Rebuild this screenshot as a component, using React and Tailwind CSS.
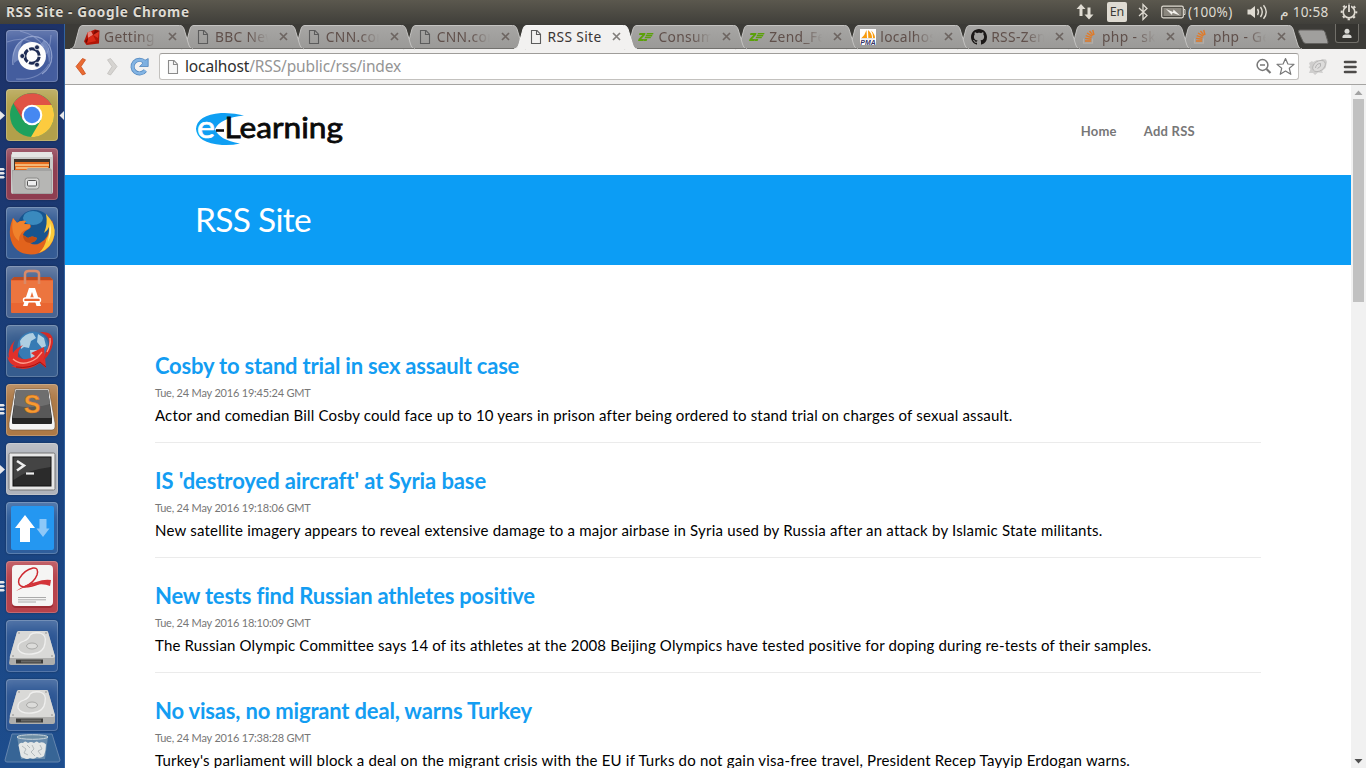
import React from "react";

const UI = "font-['Noto_Sans','Liberation_Sans',sans-serif]";

/* ---------- favicons ---------- */
const PageIcon = ({ color = "#5c5c5c", fill = "none" }) => (
  <svg width="16" height="16" viewBox="0 0 16 16">
    <path d="M3.5 1.5H9L12.5 5.2V14.5H3.5Z" fill={fill} stroke={color} strokeWidth="1.1" />
    <path d="M8.5 1.5V5.5H12.5" fill="none" stroke={color} strokeWidth="1.1" />
  </svg>
);
const RubyIcon = () => (
  <svg width="16" height="16" viewBox="0 0 16 16">
    <path d="M3.5 3.5L11 0.5L15.5 1.5L15 14.5L2.5 16L0 12.5Z" fill="#b11507" />
    <path d="M3.5 3.5L7 2L9 6L4 9Z" fill="#e8857b" />
    <path d="M4 9L9 6L12 12L3 14Z" fill="#d92a17" />
    <path d="M9 6L15 2.5L14 9Z" fill="#da3522" />
    <path d="M1 12L4 9L3 14Z" fill="#6d0b05" />
    <path d="M11 1L15 2L9 6Z" fill="#7d0d06" />
  </svg>
);
const ZendIcon = () => (
  <svg width="16" height="16" viewBox="0 0 16 16">
    <g fill="#5ba10a">
      <path d="M1.5 4H7.5L7 6L3.2 10H6L5.5 12H0L0.6 10L4.4 6H1Z" />
      <path d="M9 4H15.5L15 5.4H8.2ZM8 6.1H14.4L13.9 7.4H7.3ZM7 8.1H13L12.5 9.3H6.6ZM6.3 10H9.3L8.6 12H5.7Z" />
    </g>
  </svg>
);
const PmaIcon = () => (
  <svg width="16" height="16" viewBox="0 0 16 16">
    <rect width="16" height="16" fill="#fff" />
    <path d="M6.5 1L7 9H1.5Q5 6 6.5 1ZM8 1Q12 4 12 9H8.3ZM11 1.5Q15 5 15 9H13Q13 4 11 1.5Z" fill="#f89c0e" />
    <path d="M1 9.8H15" stroke="#bbb" strokeWidth="0.6" />
    <text x="0.3" y="15.8" fontSize="6.3" fontWeight="700" fontStyle="italic" fill="#333366" textLength="15.4" lengthAdjust="spacingAndGlyphs" fontFamily="Liberation Sans, sans-serif">PMA</text>
  </svg>
);
const GithubIcon = () => (
  <svg width="16" height="16" viewBox="0 0 16 16">
    <path fill="#1b1817" d="M8 0C3.58 0 0 3.58 0 8c0 3.54 2.29 6.53 5.47 7.59.4.07.55-.17.55-.38 0-.19-.01-.82-.01-1.49-2.01.37-2.53-.49-2.69-.94-.09-.23-.48-.94-.82-1.13-.28-.15-.68-.52-.01-.53.63-.01 1.08.58 1.23.82.72 1.21 1.87.87 2.33.66.07-.52.28-.87.51-1.07-1.78-.2-3.64-.89-3.64-3.95 0-.87.31-1.59.82-2.15-.08-.2-.36-1.02.08-2.12 0 0 .67-.21 2.2.82.64-.18 1.32-.27 2-.27s1.36.09 2 .27c1.53-1.04 2.2-.82 2.2-.82.44 1.1.16 1.92.08 2.12.51.56.82 1.27.82 2.15 0 3.07-1.87 3.75-3.65 3.95.29.25.54.73.54 1.48 0 1.07-.01 1.93-.01 2.2 0 .21.15.46.55.38A8.01 8.01 0 0 0 16 8c0-4.42-3.58-8-8-8Z" />
  </svg>
);
const StackIcon = () => (
  <svg width="16" height="16" viewBox="0 0 16 16" fill="none">
    <path d="M1.500 9.500V14.200H10.500V9.500" stroke="#b3aca6" strokeWidth="1.2" />
    <path d="M3 12H9.200M3.100 9.400L9.300 10.300M3.700 6.600L9.600 8.600M5 4L10.100 7.200M7.500 2L11 6.400M10.700 1L12 6" stroke="#e07a28" strokeWidth="1.4" />
  </svg>
);

const tabs = [
  { t: "Getting", I: RubyIcon, z: "z-20" },
  { t: "BBC New", I: PageIcon, z: "z-[19]" },
  { t: "CNN.com", I: PageIcon, z: "z-[18]" },
  { t: "CNN.com", I: PageIcon, z: "z-[17]" },
  { t: "RSS Site", I: PageIcon, z: "z-30", active: true },
  { t: "Consum", I: ZendIcon, z: "z-[15]" },
  { t: "Zend_Fe", I: ZendIcon, z: "z-[14]" },
  { t: "localhos", I: PmaIcon, z: "z-[13]" },
  { t: "RSS-Zen", I: GithubIcon, z: "z-[12]" },
  { t: "php - ski", I: StackIcon, z: "z-[11]" },
  { t: "php - Ge", I: StackIcon, z: "z-[10]" },
];

const Tab = ({ t, I, z, active }) => (
  <div className={`relative h-[25px] w-[110.9px] shrink-0 ${z}`}>
    <svg className="absolute left-0 top-0 overflow-visible" width="122" height="25">
      <defs>
        <linearGradient id="tabfill" x1="0" y1="0" x2="0" y2="1">
          <stop offset="0" stopColor="#a7a6a4" />
          <stop offset="1" stopColor="#9a9997" />
        </linearGradient>
      </defs>
      <path
        d="M-1 25C2 24.500 3 23 4 20L8 5C9 2 10 1.500 12 1.500H108.500C111 1.500 112 2.500 113 5L117.500 20C118.500 23 119.500 24.500 122 25Z"
        fill={active ? "#f2f1f0" : "url(#tabfill)"}
      />
      <path
        d="M-1 25C2 24.500 3 23 4 20L8 5C9 2 10 1.500 12 1.500H108.500C111 1.500 112 2.500 113 5L117.500 20C118.500 23 119.500 24.500 122 25"
        fill="none"
        stroke={active ? "#f8f8f7" : "#c4c3c1"}
        strokeWidth="1"
      />
      {!active && <path d="M2 24.500H121" stroke="#72716e" />}
    </svg>
    <div className="relative flex h-full items-center pl-[13px]">
      <span className="w-4"><I /></span>
      <span
        className={`ml-1 w-[56px] whitespace-nowrap text-[13.8px] leading-5 tracking-[0.35px] ${
          active
            ? "text-[#3a3635]"
            : "text-[#60504b] [mask-image:linear-gradient(to_right,black_60%,transparent_95%)]"
        }`}
      >
        {t}
      </span>
      <svg className="ml-[8px]" width="9" height="9" viewBox="0 0 9 9">
        <path d="M1 1L8 8M8 1L1 8" stroke={active ? "#827f7c" : "#6d6561"} strokeWidth="1.7" />
      </svg>
    </div>
  </div>
);

/* ---------- top panel ---------- */
const TopPanel = () => (
  <div className={`flex h-6 shrink-0 items-center bg-linear-to-b from-[#5b584e] to-[#403f3a] pl-[6px] text-[#dfdbd2] ${UI}`}>
    <div className="w-[1070px] text-[13.6px] font-bold leading-6 tracking-[0.62px] [text-shadow:0_-1px_0_#222]">RSS Site - Google Chrome</div>
    <svg width="18" height="18" viewBox="0 0 18 18" fill="#dfdbd2">
      <path d="M5 1L9.500 6H6.500V13H3.500V6H0.500ZM13 16.500L8.500 11.500H11.500V4.500H14.500V11.500H17.500Z" />
    </svg>
    <div className="ml-[13px] flex h-5 w-5 items-center justify-center rounded-[2px] bg-[#dfdbd2] text-[12.5px] text-[#3c3b37]">En</div>
    <svg className="ml-[10px]" width="12" height="18" viewBox="0 0 12 18" fill="none" stroke="#dfdbd2" strokeWidth="1.3">
      <path d="M2 5L10 12.500L6 16.500V1.500L10 5.500L2 13" />
    </svg>
    <svg className="ml-[12px]" width="25" height="14" viewBox="0 0 25 14">
      <rect x="0.7" y="1.200" width="21.600" height="11.600" rx="1.500" fill="none" stroke="#dfdbd2" strokeWidth="1.200" />
      <rect x="2.500" y="3" width="18" height="8" fill="#8b877e" />
      <path d="M23 4.500H24V9.500H23" stroke="#dfdbd2" fill="none" />
      <path d="M5 4L12 7L12.500 4.500L19 10.500L11.500 7.800L11 10Z" fill="#f4f2ed" />
    </svg>
    <div className="ml-[2px] w-[48px] whitespace-nowrap text-[13.6px] leading-6 tracking-[0.3px]">(100%)</div>
    <svg className="ml-[11px]" width="21" height="16" viewBox="0 0 21 16" fill="none" stroke="#dfdbd2" strokeWidth="1.400">
      <path d="M0.500 5.500H3.500L8 2V14L3.500 10.500H0.500Z" fill="#dfdbd2" stroke="none" />
      <path d="M10.500 5Q12.500 8 10.500 11M13.500 3Q17 8 13.500 13" />
      <path d="M16.500 1.200Q22 8 16.500 14.800" />
    </svg>
    <div className="ml-[12px] text-[14px] leading-6 font-['DejaVu_Sans',sans-serif]">م</div>
    <div className="ml-[4px] w-[38px] whitespace-nowrap text-[13.6px] leading-6 tracking-[0.2px]">10:58</div>
    <svg className="ml-[9px]" width="18" height="18" viewBox="0 0 18 18" fill="none" stroke="#dfdbd2">
      <circle cx="9" cy="9" r="5.800" strokeWidth="1.700" />
      <circle cx="9" cy="9" r="7.300" strokeWidth="2" strokeDasharray="2.300 3.430" strokeDashoffset="1" />
      <path d="M9 1V9" stroke="#494741" strokeWidth="4" />
      <path d="M9 1.500V9" strokeWidth="1.800" />
    </svg>
  </div>
);

/* ---------- launcher ---------- */
const Dash = () => (
  <>
    <g fill="none" stroke="#b5c2e4" strokeWidth="1.200" opacity="0.65">
      <path d="M7 35Q5 14 22 7Q36 4 44 17Q50 34 36 44" />
      <path d="M10 49Q33 51 43 34M45 5Q44 20 40 24M1 12Q17 6 27 13M14 1Q31 5 38 17" opacity=".6" />
    </g>
    <path d="M8 33Q5 16 18 9Q12 17 15 28ZM38 10Q48 22 43 34Q43 21 34 15Z" fill="#9eb0da" opacity=".5" />
    <circle cx="26" cy="26" r="14" fill="#fdfdfd" />
    <circle cx="26" cy="26" r="7.200" fill="none" stroke="#1d2b54" strokeWidth="3" strokeDasharray="13.500 1.580" strokeDashoffset="-0.8" />
    <g fill="#1d2b54" stroke="#fff" strokeWidth="0.8">
      <circle cx="16.300" cy="26" r="2.500" /><circle cx="31" cy="17.300" r="2.500" /><circle cx="31" cy="34.700" r="2.500" />
    </g>
  </>
);
const ChromeI = () => (
  <>
    <circle cx="26" cy="26" r="22" fill="#1fa15d" />
    <path d="M7.500 14.500A22 22 0 0 1 45.500 16H26L17 31Z" fill="#e05345" />
    <path d="M45.600 16A22 22 0 0 1 25 48L35 31L26 16Z" fill="#fccb3f" />
    <path d="M7.500 14.500L17 31L15 22Z" fill="#a93a2d" opacity=".35" />
    <circle cx="26" cy="26" r="10.300" fill="#fff" />
    <circle cx="26" cy="26" r="8.200" fill="#4688f1" />
  </>
);
const FilesI = () => (
  <>
    <path d="M7 4H45L47 7V44Q47 46 45 46H7Q5 46 5 44V7Z" fill="#c9c9c7" />
    <path d="M6 4H46V9H6Z" fill="#e5e5e4" />
    <rect x="8" y="11" width="36" height="12" fill="#40342d" />
    <rect x="9" y="14" width="34" height="8" fill="#e66c1f" />
    <path d="M9 17H43M10 20H42" stroke="#f9cf94" strokeWidth="1.300" />
    <path d="M6 22H20L22 20H44L46 22V46H7Z" fill="#a3a3a2" />
    <rect x="7" y="23" width="38" height="22" fill="#b6b6b4" />
    <rect x="19" y="30" width="14" height="11" rx="2.500" fill="#d6d6d4" stroke="#8a8a88" />
    <rect x="21.500" y="32.500" width="9" height="5.500" rx="1" fill="#eee" stroke="#555" />
  </>
);
const FirefoxI = () => (
  <>
    <circle cx="28.500" cy="20" r="17" fill="#17558f" />
    <ellipse cx="27" cy="11" rx="10" ry="7" fill="#52aede" opacity=".6" />
    <path d="M7 11Q3 20 4 29Q7 47 25 47.500Q42 47 47.500 32Q49.500 22 46 13L43 18Q44 31 34 36Q29 39 24 36Q30 35 31 31Q26 28 22 31L17 28Q18 24 23 22Q26 20 24 17.500L18 17L20 14Q14 13 11 16Z" fill="#e2631c" />
    <path d="M40 7Q50 17 48.500 28Q46 41 33 46Q39 40 40.500 32Q44 27 43 20Q42 23 38 26Q42 17 40 7Z" fill="#fbc93a" />
    <path d="M44 16Q47 26 42 35Q43 28 44 16Z" fill="#fff2a0" />
    <path d="M7 11L11 16Q15 13 20 14L18 17L24 17.500Q25 20 22 22Q13 24 13 34Q4 28 7 11Z" fill="#f0822b" />
    <path d="M17 28L22 31Q26 28 31 31Q30 35 24 36Q17 35 17 28Z" fill="#c24c12" />
  </>
);
const SoftwareI = () => (
  <>
    <path d="M5 14L8 11H44L47 14V46Q47 47 46 47H6Q5 47 5 46Z" fill="#e96632" />
    <path d="M8 11H44L47 14H5Z" fill="#ba4c22" />
    <path d="M5 15H47V37H5Z" fill="#ef7e48" opacity=".6" />
    <path d="M19 18V8Q19 5 23 5H29Q33 5 33 8V18" fill="none" stroke="#d98a68" strokeWidth="2.500" />
    <path d="M23 22H29L35 40H30.500L26 26L21.500 40H17Z" fill="#fff" />
    <rect x="17.500" y="32" width="17" height="3.800" rx="1.900" fill="#e96632" stroke="#fff" strokeWidth="1.400" />
  </>
);
const GlobeI = () => (
  <>
    <circle cx="27" cy="22" r="15.500" fill="#377bb4" />
    <path d="M14 16Q19 8 27 8L30 13L25 16L23 23L18 22L15 24ZM32 9L38 13L40 21L36 23L31 17ZM24 25L31 25L30 32L25 34Z" fill="#c3deea" opacity=".85" />
    <path d="M9 15Q1 24 3 33L1 31Q3 39 9 41L5 41Q20 48 34 38L40 43L38 22L25 28L29 31Q20 37 12 32Q11 26 17 20Q10 23 7 28Q6 21 9 15Z" fill="#e0302a" />
    <path d="M34 7Q48 6 47 18Q45 29 37 36L40 26Q45 19 42 13Q39 9 34 7Z" fill="#d62a25" />
    <path d="M7 34Q17 43 31 33L36 27M44 13Q45 20 41 27" fill="none" stroke="#ff9b8a" strokeWidth="1.300" />
    <path d="M10 42Q24 44 34 37L40 42" fill="none" stroke="#a3120f" strokeWidth="1" />
  </>
);
const SublimeI = () => (
  <>
    <path d="M9 5H43L49 39V43Q49 46 46 46H6Q3 46 3 43V39Z" fill="#f4f4f4" stroke="#6b5138" strokeWidth=".6" />
    <path d="M10 6H42L46 34V39Q46 40 45 40H7Q6 40 6 39V34Z" fill="#262626" />
    <path d="M10 6H42L45.500 34H6.500Z" fill="#585858" />
    <path d="M10 6H42L44 20Q26 26 8 21Z" fill="#777" opacity=".7" />
    <text x="26" y="29" fontSize="25" textAnchor="middle" fontWeight="700" fill="#f79a32" stroke="#b76719" strokeWidth=".4" fontFamily="Liberation Sans, sans-serif">S</text>
  </>
);
const TerminalI = () => (
  <>
    <rect x="3" y="10" width="46" height="37" rx="1.500" fill="#e7e7e7" stroke="#777" />
    <rect x="7" y="14" width="38" height="29" fill="#2b2b2b" stroke="#111" />
    <path d="M7.500 14.500H44.500V24Q20 27 7.500 37Z" fill="#4b4b4b" opacity=".8" />
    <path d="M11 18L18 22.500L11 27.500" fill="none" stroke="#eee" strokeWidth="2.500" />
    <path d="M20 30.500H28" stroke="#eee" strokeWidth="2.200" />
  </>
);
const UpdaterI = () => (
  <>
    <rect x="5" y="4" width="43" height="44" rx="2" fill="#2497f1" />
    <path d="M19 13L29 26H24V40H14V26H9Z" fill="#fff" />
    <path d="M37 35L30.500 26.500H33.500V17H40.500V26.500H43.500Z" fill="#8dc8f8" />
  </>
);
const PdfI = () => (
  <>
    <rect x="6" y="5" width="41" height="42" rx="4" fill="#9c2c33" />
    <rect x="6" y="4" width="41" height="41" rx="4" fill="#f5f5f4" />
    <path d="M18 26Q28 22 31 14Q33 6 27 7Q18 9 13 18Q11 25 18 26Q26 26 34 22Q39 20 44 22" fill="none" stroke="#ce2a31" strokeWidth="1.500" />
    <path d="M10 30Q20 23 30 21Q38 18 45 19L44 25Q38 22 28 24Q18 26 10 30Z" fill="#d3353a" />
    <path d="M12 36.500H40M12 38.800H40M12 41H30" stroke="#aaa" strokeWidth="1" />
  </>
);
const DriveI = () => (
  <>
    <path d="M4 37L11 12Q12 11 13 11H40Q42 11 42 12L49 37V43Q49 45 47 45H5Q3 45 3 43Z" fill="#aeaeac" />
    <path d="M4 36L11 12Q12 11 13 11H40Q42 11 42 12L49 36Q49 38 47 38H5Q3 38 4 36Z" fill="#d9d9d7" />
    <path d="M12 29Q11 23 18 21Q23 19 24 15Q27 12 34 13Q41 15 39 23Q38 33 26 34Q15 35 12 29Z" fill="#d0d0ce" stroke="#efefee" strokeWidth="1.300" />
    <ellipse cx="26" cy="26" rx="5.500" ry="3" fill="#dcdcda" stroke="#a9a9a7" />
    <g fill="#888"><circle cx="13" cy="13" r=".8" /><circle cx="40" cy="13" r=".8" /><circle cx="7" cy="36" r=".8" /><circle cx="46" cy="36" r=".8" /></g>
    <path d="M10 39.500H37V43.500H10Z" fill="#3c3c3b" />
    <path d="M15 41.500H35" stroke="#686867" strokeWidth="2" />
  </>
);

const launchers = [
  { I: Dash, c: "bg-[#445d9e]" },
  { I: ChromeI, c: "bg-[#b2a04a]", m: "single", focus: true },
  { I: FilesI, c: "bg-[#8e3d50]", m: "multi" },
  { I: FirefoxI, c: "bg-[#345b94]" },
  { I: SoftwareI, c: "bg-[#486492]" },
  { I: GlobeI, c: "bg-[#365c8e]" },
  { I: SublimeI, c: "bg-[#ad7946]", m: "multi" },
  { I: TerminalI, c: "bg-[#afb3bb]", m: "single" },
  { I: UpdaterI, c: "bg-[#2f5e9c]" },
  { I: PdfI, c: "bg-[#b6424b]", m: "multi" },
  { I: DriveI, c: "bg-[#2c5694]" },
  { I: DriveI, c: "bg-[#2c5694]" },
];

const Launcher = () => (
  <div className="flex w-[65px] shrink-0 flex-col gap-[7px] overflow-hidden border-r border-[#3263a0] bg-linear-to-b from-[#1d3268] via-[#183f7b] to-[#1d4d8d] pt-[6px]">
    {launchers.map(({ I, c, m, focus }, i) => (
      <div key={i} className="flex h-[52px] shrink-0 items-center">
        <svg width="6" height="16" viewBox="0 0 6 16" fill="#e8e8ea">
          {m === "single" && <path d="M0 4L5 8.500L0 13Z" />}
          {m === "multi" && <path d="M0 2H3.500L5 3.200L3.500 4.500H0ZM0 6H3.500L5 7.200L3.500 8.500H0ZM0 10H3.500L5 11.200L3.500 12.500H0Z" />}
        </svg>
        <div className={`h-[52px] w-[52px] rounded-[4px] shadow-[inset_0_0_0_1px_rgba(255,255,255,0.2),inset_0_14px_14px_-8px_rgba(255,255,255,0.22),0_0_2px_rgba(0,0,0,0.4)] ${c}`}>
          <svg width="52" height="52" viewBox="0 0 52 52"><I /></svg>
        </div>
        {focus && (
          <svg width="6" height="16" viewBox="0 0 6 16" fill="#e8e8ea"><path d="M6 4L1.500 8.500L6 13Z" /></svg>
        )}
      </div>
    ))}
    <svg className="-mt-[5px] ml-[3px] shrink-0" width="59" height="30" viewBox="0 0 59 30">
      <path d="M9 1H49L57 27Q57 29 55 29H4Q2 29 2 27Z" fill="#376596" stroke="#6485ae" />
      <path d="M14 4L18 26H42L45 4Z" fill="#9cb4c2" opacity=".5" />
      <ellipse cx="29.500" cy="4" rx="15.500" ry="2.300" fill="#6d8da4" stroke="#c9d4db" />
      <path d="M15.500 12Q17 9 20 10Q22 7 25 10Q28 8 31 10Q34 7 36 10Q40 8 43 11.500Q43 17 41 23Q37 26 34 24Q31 27 27 25Q24 27 21 25Q18 25 17.500 22Z" fill="#e4e7e6" />
      <path d="M19 13L23 16L21 20L25 22M29 12L31 16L28 19L32 23M37 12L39 16L35 18L38 22M24 12L27 15" stroke="#b4bbbd" fill="none" />
    </svg>
  </div>
);

/* ---------- browser chrome ---------- */
const TabStrip = () => (
  <div className={`flex h-[25px] shrink-0 bg-[#3c3b37] pl-[6px] ${UI}`}>
    {tabs.map((t, i) => <Tab key={i} {...t} />)}
    <svg className="ml-[6px] mt-[5px] shrink-0" width="34" height="16" viewBox="0 0 34 16">
      <path d="M3 1H25Q27 1 28 3L31 13Q31.500 14.500 29.500 14.500H9Q7 14.500 6 12.500L1.500 3Q1 1 3 1Z" fill="#a09f9d" stroke="#62615e" />
    </svg>
    <div className="ml-[4px] flex h-[19px] w-6 shrink-0 items-center justify-center rounded-b-[3px] border border-t-0 border-[#716f69] bg-[#353430]">
      <svg width="12" height="12" viewBox="0 0 12 12" fill="#d8d7d3">
        <circle cx="6" cy="4.300" r="2.500" />
        <path d="M1.500 11V9.500Q1.500 7.800 4 7.500H8Q10.500 7.800 10.500 9.500V11Z" />
      </svg>
    </div>
  </div>
);

const Toolbar = () => (
  <div className={`flex h-9 shrink-0 items-center border-b border-[#a5a4a2] bg-[#f2f1f0] pl-[9px] ${UI}`}>
    <svg width="14" height="20" viewBox="0 0 14 20">
      <path d="M2 9.500L8.500 1.500L11.500 2.800L7 9.500L11.500 16.700L8.500 18Z" fill="#e96b33" stroke="#ca4c1c" strokeWidth=".8" strokeLinejoin="round" />
    </svg>
    <svg className="ml-[17px]" width="14" height="20" viewBox="0 0 14 20">
      <path d="M12 9.500L5.500 1.500L2.500 2.800L7 9.500L2.500 16.700L5.500 18Z" fill="#d6d4d1" stroke="#c1bfbc" strokeWidth=".8" strokeLinejoin="round" />
    </svg>
    <svg className="ml-[11px]" width="20" height="20" viewBox="0 0 20 20">
      <path d="M15.300 13.500A7 6.800 0 1 1 14.500 4.800" fill="none" stroke="#5085bd" strokeWidth="4" />
      <path d="M18.200 1.500V9.500H9.500L12.500 6.700L12 5Z" fill="#7eb0e1" stroke="#5085bd" strokeWidth=".8" />
      <path d="M15.300 13.500A7 6.800 0 1 1 14.500 4.800" fill="none" stroke="#83b4e3" strokeWidth="2.700" />
    </svg>
    <div className="ml-[9px] flex h-[27px] w-[1140px] items-center rounded-[3px] border border-[#c3c1be] border-t-[#9f9d9a] bg-white pl-[5px]">
      <PageIcon color="#8b8b8b" fill="#f7f7f7" />
      <div className="-mt-[2px] ml-[4px] w-[1070px] shrink-0 whitespace-nowrap text-[15.5px] leading-6 tracking-[-0.14px] text-[#959595]">
        <span className="text-[#2e2e2e]">localhost</span>/RSS/public/rss/index
      </div>
      <svg className="shrink-0" width="17" height="17" viewBox="0 0 17 17" fill="none" stroke="#777" strokeWidth="1.500">
        <circle cx="7.500" cy="7" r="5.400" /><path d="M5 7H10" /><path d="M11.500 11L15.500 15" strokeWidth="2.200" />
      </svg>
      <svg className="ml-[4px] shrink-0" width="19" height="19" viewBox="0 0 19 19" fill="#fff" stroke="#777" strokeWidth="1.200">
        <path d="M9.500 1.500L11.900 7L18 7.400L13.300 11.300L14.800 17.300L9.500 14L4.200 17.300L5.700 11.300L1 7.400L7.100 7Z" strokeLinejoin="round" />
      </svg>
    </div>
    <svg className="ml-[9px]" width="20" height="18" viewBox="0 0 20 18">
      <path d="M1 5L4 3L5 4L9 2L12 3L14 1L18 1.500L19 4L17.500 10L14 13L15 15L10 14.500L7 17L5 15L1 15L2.500 11L0.500 9L2 8Z" fill="#cfcecd" />
      <ellipse cx="11" cy="8" rx="7" ry="4.800" transform="rotate(-35 11 8)" fill="#dddcdb" stroke="#b3b2b1" strokeWidth=".8" />
      <path d="M7.500 10Q8 5.500 12.500 5.500Q14 8.500 9.500 10.500" fill="none" stroke="#adacab" strokeWidth=".9" />
    </svg>
    <svg className="ml-[15px]" width="14" height="14" viewBox="0 0 14 14">
      <path d="M2 2H12.500M2 7H12.500M2 12H12.500" stroke="#4d4b49" strokeWidth="2.600" strokeLinecap="round" />
    </svg>
  </div>
);

/* ---------- page ---------- */
const news = [
  { h: "Cosby to stand trial in sex assault case", hs: "tracking-[-0.2px]", d: "Tue, 24 May 2016 19:45:24 GMT", p: "Actor and comedian Bill Cosby could face up to 10 years in prison after being ordered to stand trial on charges of sexual assault.", ps: "tracking-[0.165px]" },
  { h: "IS 'destroyed aircraft' at Syria base", hs: "tracking-[-0.09px]", d: "Tue, 24 May 2016 19:18:06 GMT", p: "New satellite imagery appears to reveal extensive damage to a major airbase in Syria used by Russia after an attack by Islamic State militants.", ps: "tracking-[0.205px]" },
  { h: "New tests find Russian athletes positive", hs: "tracking-[-0.2px]", d: "Tue, 24 May 2016 18:10:09 GMT", p: "The Russian Olympic Committee says 14 of its athletes at the 2008 Beijing Olympics have tested positive for doping during re-tests of their samples.", ps: "tracking-[0.165px]" },
  { h: "No visas, no migrant deal, warns Turkey", hs: "tracking-[-0.18px]", d: "Tue, 24 May 2016 17:38:28 GMT", p: "Turkey's parliament will block a deal on the migrant crisis with the EU if Turks do not gain visa-free travel, President Recep Tayyip Erdogan warns.", ps: "tracking-[0.195px]" },
];

const Logo = () => (
  <svg width="150" height="36" viewBox="0 0 150 36">
    <path d="M49 3.500Q39 0.500 26 1Q2 3 1 17Q2 31 27 33Q37 33.500 45 31.500Q24 28 20 17Q25 6 49 3.500Z" fill="#0f9ff3" />
    <text x="2" y="25.800" fontSize="31" fontWeight="400" fill="#fff" stroke="#fff" strokeWidth=".7" textLength="18" lengthAdjust="spacingAndGlyphs" fontFamily="Lato, sans-serif">e</text>
    <path d="M21 18.500H29" stroke="#111" strokeWidth="2.600" />
    <text x="29.500" y="26" fontSize="29" fontWeight="400" fill="#0a0a0a" stroke="#0a0a0a" strokeWidth=".8" textLength="118.500" lengthAdjust="spacingAndGlyphs" fontFamily="Lato, sans-serif">Learning</text>
  </svg>
);

const Page = () => (
  <div className="flex min-h-0 flex-1 bg-white font-['Lato',sans-serif]">
    <div className="w-[1286px] overflow-hidden">
      <header className="flex h-[90px] items-center justify-between pl-[130px] pr-[156px]">
        <Logo />
        <nav className="flex gap-[27px] pt-[3px] text-[13px] font-bold tracking-[0.25px] text-[#777]">
          <a>Home</a>
          <a>Add RSS</a>
        </nav>
      </header>
      <div className="flex h-[90px] items-center bg-[#0c9df5] pl-[130px] text-[33.5px] leading-none tracking-[-0.7px] text-white">
        <h1>RSS Site</h1>
      </div>
      <main className="pl-[90px] pr-[90px] pt-[63px]">
        {news.map(({ h, hs, d, p, ps }) => (
          <article key={h} className="h-[115px] whitespace-nowrap border-b border-[#ebebeb] pt-[26px]">
            <h3 className={`text-[22px] font-bold leading-6 text-[#139df2] ${hs}`}>{h}</h3>
            <div className="mt-[4px] text-[11px] leading-[22px] tracking-[-0.2px] text-[#777]">{d}</div>
            <p className={`text-[15px] leading-[22px] text-black ${ps}`}>{p}</p>
          </article>
        ))}
      </main>
    </div>
    <div className="flex w-[15px] flex-col items-center bg-[#f1f1f1]">
      <svg width="15" height="14" viewBox="0 0 15 14"><path d="M3.500 10L7.500 5.500L11.500 10Z" fill="#a3a3a3" /></svg>
      <div className="h-[203px] w-[11px] bg-[#c1c1c1]" />
      <svg className="mt-auto" width="15" height="14" viewBox="0 0 15 14"><path d="M3.500 5L7.500 9.500L11.500 5Z" fill="#505050" /></svg>
    </div>
  </div>
);

export default function App() {
  return (
    <div className="flex h-[768px] w-[1366px] flex-col overflow-hidden bg-white">
      <TopPanel />
      <div className="flex min-h-0 flex-1">
        <Launcher />
        <div className="flex min-w-0 flex-1 flex-col">
          <TabStrip />
          <Toolbar />
          <Page />
        </div>
      </div>
    </div>
  );
}
